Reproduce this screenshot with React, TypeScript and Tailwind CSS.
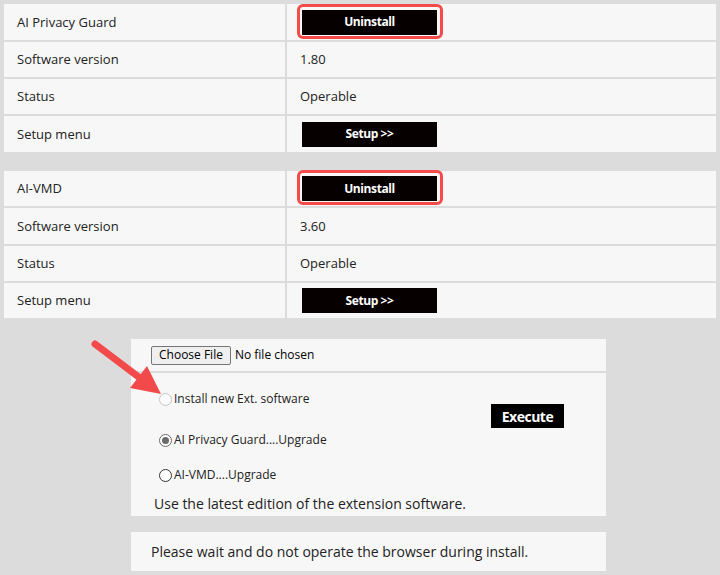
import React from "react";

const cell = "bg-[#f7f7f7] flex items-center";

function BlackBtn({ label, ring }: { label: string; ring?: boolean }) {
  return (
    <div className="relative">
      {ring && (
        <div className="absolute -left-[5px] -top-[6px] -right-[6px] -bottom-[4px] border-[3px] border-[#f44a4a] rounded-[6px]" />
      )}
      <div className="w-[135px] h-[25px] bg-[#060000] text-white font-bold text-[12px] tracking-[-0.4px] flex items-center justify-center">
        {label}
      </div>
    </div>
  );
}

function Row({ h, label, children, btn }: { h: string; label: string; children: React.ReactNode; btn?: boolean }) {
  return (
    <div className={`grid grid-cols-[281px_1fr] gap-x-[2px] ${h}`}>
      <div className={`${cell} pl-[13px] pt-[1px]`}>{label}</div>
      <div className={`${cell} ${btn ? "pl-[15px]" : "pl-[13px] pt-[1px]"}`}>{children}</div>
    </div>
  );
}

function Radio({ kind }: { kind: "disabled" | "checked" | "off" }) {
  if (kind === "disabled")
    return <span className="w-[13px] h-[13px] rounded-full border border-[#c6c6c6] bg-[#fbfbfb] shrink-0" />;
  if (kind === "checked")
    return (
      <span className="w-[13px] h-[13px] rounded-full border border-[#6a6a6a] bg-white shrink-0 flex items-center justify-center">
        <span className="w-[7px] h-[7px] rounded-full bg-[#6a6a6a]" />
      </span>
    );
  return <span className="w-[13px] h-[13px] rounded-full border border-[#333] bg-white shrink-0" />;
}

export default function App() {
  return (
    <div className="relative w-[720px] h-[575px] bg-[#dcdcdc] overflow-hidden font-['Open_Sans',sans-serif] text-[13px] text-[#222]">
      <div className="pt-[4px] px-[4px]">
        <div className="flex flex-col gap-[2px]">
          <Row h="h-[36px]" label="AI Privacy Guard" btn>
            <BlackBtn label="Uninstall" ring />
          </Row>
          <Row h="h-[35px]" label="Software version">1.80</Row>
          <Row h="h-[35px]" label="Status">Operable</Row>
          <Row h="h-[36px]" label="Setup menu" btn>
            <BlackBtn label="Setup >>" />
          </Row>
        </div>
        <div className="flex flex-col gap-[2px] mt-[19px]">
          <Row h="h-[35px]" label="AI-VMD" btn>
            <BlackBtn label="Uninstall" ring />
          </Row>
          <Row h="h-[36px]" label="Software version">3.60</Row>
          <Row h="h-[35px]" label="Status">Operable</Row>
          <Row h="h-[35px]" label="Setup menu" btn>
            <BlackBtn label="Setup >>" />
          </Row>
        </div>
      </div>

      <div className="ml-[131px] w-[475px] mt-[21px]">
        <div className="h-[32px] bg-[#f7f7f7] flex items-center pl-[20px] text-[12px]">
          <span className="h-[19px] px-[7px] border border-[#767676] bg-[#efefef] rounded-[2px] flex items-center text-black leading-none">
            Choose File
          </span>
          <span className="ml-[4px] text-black">No file chosen</span>
        </div>
        <div className="h-[143px] mt-[2px] bg-[#f7f7f7] grid grid-cols-[360px_auto]">
          <div className="flex flex-col">
            <div className="h-[20px] mt-[16px] ml-[28px] flex items-center gap-[2px] text-[12px]">
              <Radio kind="disabled" />
              <span>Install new Ext. software</span>
            </div>
            <div className="h-[20px] mt-[21px] ml-[28px] flex items-center gap-[2px] text-[12px]">
              <Radio kind="checked" />
              <span>AI Privacy Guard....Upgrade</span>
            </div>
            <div className="h-[20px] mt-[15px] ml-[28px] flex items-center gap-[2px] text-[12px]">
              <Radio kind="off" />
              <span>AI-VMD....Upgrade</span>
            </div>
            <div className="h-[20px] mt-[8px] pl-[23px] flex items-center text-[14px] whitespace-nowrap">
              Use the latest edition of the extension software.
            </div>
          </div>
          <div className="pt-[31px]">
            <div className="w-[73px] h-[24px] bg-black text-white font-bold text-[14px] tracking-[-0.5px] flex items-center justify-center">
              Execute
            </div>
          </div>
        </div>
        <div className="h-[39px] mt-[16px] bg-[#f7f7f7] flex items-center pl-[20px] text-[14px]">
          Please wait and do not operate the browser during install.
        </div>
      </div>

      <svg className="absolute left-0 top-0 pointer-events-none" width="720" height="575" viewBox="0 0 720 575">
        <line x1="95" y1="344" x2="140" y2="378" stroke="#f24a4a" strokeWidth="7" strokeLinecap="round" />
        <polygon points="130,388 147,366 161,394" fill="#f24a4a" />
      </svg>
    </div>
  );
}
